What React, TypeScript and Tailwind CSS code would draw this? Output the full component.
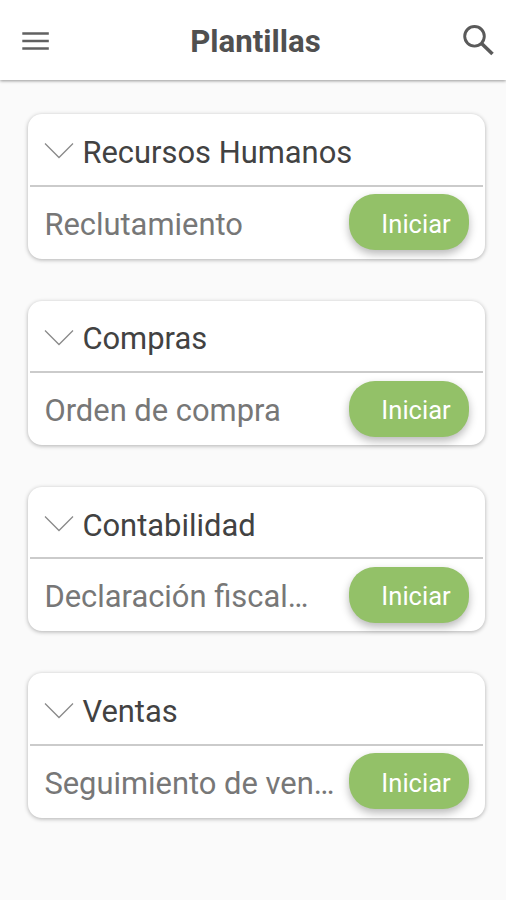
interface Template {
  category: string
  name: string
}

const templates: Template[] = [
  { category: 'Recursos Humanos', name: 'Reclutamiento' },
  { category: 'Compras', name: 'Orden de compra' },
  { category: 'Contabilidad', name: 'Declaración fiscal…' },
  { category: 'Ventas', name: 'Seguimiento de ven…' },
]

function Header() {
  return (
    <header className="flex h-[79.5px] items-center justify-between bg-white pl-[22px] pr-[12px] shadow-[0_1px_3px_rgba(0,0,0,0.4)]">
      <button aria-label="Menu" className="w-[26px] pt-[2px]">
        <svg width="28" height="20" viewBox="0 0 28 20" fill="none" stroke="#616161" strokeWidth="2.6">
          <path d="M0.3 2.5h26.5M0.3 10h26.5M0.3 17.5h26.5" />
        </svg>
      </button>
      <h1 className="pt-[5px] text-[31.2px] leading-9 font-bold text-[#505050]">Plantillas</h1>
      <button aria-label="Buscar" className="pt-[1px]">
        <svg width="31" height="31" viewBox="0 0 31 31" fill="none" stroke="#5a5a5a">
          <circle cx="11.5" cy="11.3" r="9.8" strokeWidth="2.9" />
          <path d="M18.6 18.5L29.5 29" strokeWidth="3.6" />
        </svg>
      </button>
    </header>
  )
}

function TemplateCard({ category, name }: Template) {
  return (
    <section className="flex h-[144.4px] flex-col rounded-[14px] bg-white shadow-[0_1px_4px_rgba(0,0,0,0.3)]">
      <div className="mx-[2px] flex h-[72.3px] items-center border-b-2 border-[#cbcbcb] pt-[6px] pl-[14px]">
        <svg width="30" height="18" viewBox="0 0 30 18" fill="none" stroke="#8a8a8a" strokeWidth="1.3" className="-mt-0.5 shrink-0">
          <path d="M1 1.5L15 15.5L29 1.5" />
        </svg>
        <h2 className="pt-px pl-[8px] text-[30.9px] leading-9 text-[#424242]">{category}</h2>
      </div>
      <div className="flex flex-1 items-center justify-between pr-[15.5px] pb-[1px] pl-[16px]">
        <p className="pt-[5px] text-[30.9px] leading-9 whitespace-nowrap text-[#777777]">{name}</p>
        <button className="h-[56px] w-[120px] shrink-0 rounded-[26px] bg-[#93c168] pt-[3px] pl-[14px] text-[25.5px] leading-8 text-white shadow-[0_4px_8px_rgba(0,0,0,0.28)]">
          Iniciar
        </button>
      </div>
    </section>
  )
}

export default function App() {
  return (
    <div className="h-[900px] w-[506px] overflow-hidden bg-[#fafafa] font-[Roboto,sans-serif]">
      <Header />
      <main className="flex flex-col gap-[42px] pt-[34.8px] pr-[21.5px] pl-[28.4px]">
        {templates.map((t) => (
          <TemplateCard key={t.category} {...t} />
        ))}
      </main>
    </div>
  )
}
